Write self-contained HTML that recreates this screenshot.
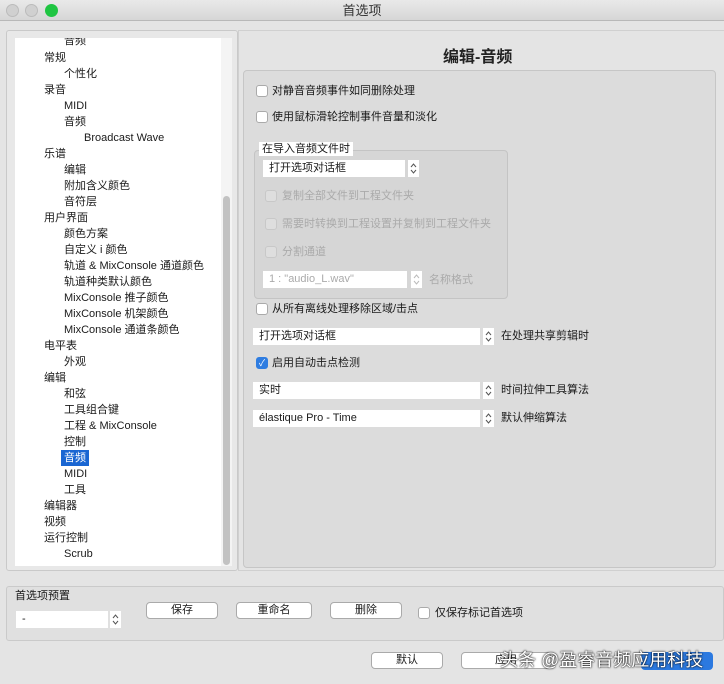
<!DOCTYPE html>
<html><head><meta charset="utf-8"><style>
*{margin:0;padding:0;box-sizing:border-box}
body{width:724px;height:684px;background:#e4e4e4;font-family:"Liberation Sans","Noto Sans CJK SC",sans-serif;font-size:11px;color:#1a1a1a;position:relative;overflow:hidden}
.a{position:absolute;white-space:nowrap}
.tb{position:absolute;left:0;top:0;width:724px;height:21px;background:linear-gradient(#e9e9e9,#d6d6d6);border-bottom:1px solid #b8b8b8;text-align:center;font-size:13px;line-height:21px;color:#333}
.dot{position:absolute;top:4px;width:13px;height:13px;border-radius:50%}
.tree div{position:absolute;height:16px;line-height:16px;white-space:nowrap}
.cb{position:absolute;width:12px;height:12px;border:1px solid #aaa;border-radius:3px;background:#fff}
.cbd{border-color:#c8c8c8;background:#dedede}
.sel{position:absolute;height:17px;background:#fff;line-height:17px;padding-left:6px}
.st{position:absolute;width:11px;height:17px;background:#fff}
.st svg{display:block}
.btn{position:absolute;height:17px;background:#fff;border:1px solid #aaa;border-radius:4px;text-align:center;line-height:15px}
.lbl{position:absolute;white-space:nowrap;line-height:14px}
.g{color:#aaa}
</style></head><body>
<div class="tb">首选项</div>
<div class="dot" style="left:6px;background:#d0d0d0;border:1px solid #bbb"></div>
<div class="dot" style="left:25px;background:#d0d0d0;border:1px solid #bbb"></div>
<div class="dot" style="left:45px;background:#1fc542"></div>

<div class="a" style="left:6px;top:30px;width:232px;height:541px;border:1px solid #c9c9c9;border-radius:3px;background:#e8e8e8"></div>
<div class="a" style="left:15px;top:38px;width:206px;height:528px;background:#fff;overflow:hidden">
<div class="tree">
<div style="left:49px;top:-5px">音频</div>
<div style="left:29px;top:12px">常规</div>
<div style="left:49px;top:28px">个性化</div>
<div style="left:29px;top:44px">录音</div>
<div style="left:49px;top:60px">MIDI</div>
<div style="left:49px;top:76px">音频</div>
<div style="left:69px;top:92px">Broadcast Wave</div>
<div style="left:29px;top:108px">乐谱</div>
<div style="left:49px;top:124px">编辑</div>
<div style="left:49px;top:140px">附加含义颜色</div>
<div style="left:49px;top:156px">音符层</div>
<div style="left:29px;top:172px">用户界面</div>
<div style="left:49px;top:188px">颜色方案</div>
<div style="left:49px;top:204px">自定义 i 颜色</div>
<div style="left:49px;top:220px">轨道 &amp; MixConsole 通道颜色</div>
<div style="left:49px;top:236px">轨道种类默认颜色</div>
<div style="left:49px;top:252px">MixConsole 推子颜色</div>
<div style="left:49px;top:268px">MixConsole 机架颜色</div>
<div style="left:49px;top:284px">MixConsole 通道条颜色</div>
<div style="left:29px;top:300px">电平表</div>
<div style="left:49px;top:316px">外观</div>
<div style="left:29px;top:332px">编辑</div>
<div style="left:49px;top:348px">和弦</div>
<div style="left:49px;top:364px">工具组合键</div>
<div style="left:49px;top:380px">工程 &amp; MixConsole</div>
<div style="left:49px;top:396px">控制</div>
<div style="left:46px;top:412px;background:#1a66d2;color:#fff;padding:0 3px">音频</div>
<div style="left:49px;top:428px">MIDI</div>
<div style="left:49px;top:444px">工具</div>
<div style="left:29px;top:460px">编辑器</div>
<div style="left:29px;top:476px">视频</div>
<div style="left:29px;top:492px">运行控制</div>
<div style="left:49px;top:508px">Scrub</div>
</div></div>
<div class="a" style="left:221px;top:38px;width:11px;height:528px;background:#f4f4f4"></div>
<div class="a" style="left:223px;top:196px;width:7px;height:369px;background:#c2c2c2;border-radius:4px"></div>

<div class="a" style="left:238px;top:30px;width:490px;height:541px;border:1px solid #d0d0d0;background:#e4e4e4"></div>
<div class="a" style="left:443px;top:43px;font-size:16px;font-weight:bold;color:#222">编辑-音频</div>
<div class="a" style="left:243px;top:70px;width:473px;height:498px;background:#dcdcdc;border:1px solid #c6c6c6;border-radius:4px"></div>

<div class="cb" style="left:256px;top:85px"></div><div class="lbl" style="left:272px;top:84px">对静音音频事件如同删除处理</div>
<div class="cb" style="left:256px;top:111px"></div><div class="lbl" style="left:272px;top:110px">使用鼠标滑轮控制事件音量和淡化</div>

<div class="a" style="left:254px;top:150px;width:254px;height:149px;background:#d6d6d6;border:1px solid #c4c4c4;border-radius:4px"></div>
<div class="lbl" style="left:259px;top:142px;background:#fff;padding:0 3px">在导入音频文件时</div>
<div class="sel" style="left:263px;top:160px;width:142px">打开选项对话框</div>
<div class="st" style="left:408px;top:160px"><svg width="11" height="17"><path d="M3 7 L5.5 4 L8 7 M3 10 L5.5 13 L8 10" fill="none" stroke="#555" stroke-width="1"/></svg></div>
<div class="cb cbd" style="left:265px;top:190px"></div><div class="lbl g" style="left:282px;top:189px">复制全部文件到工程文件夹</div>
<div class="cb cbd" style="left:265px;top:218px"></div><div class="lbl g" style="left:282px;top:217px">需要时转换到工程设置并复制到工程文件夹</div>
<div class="cb cbd" style="left:265px;top:246px"></div><div class="lbl g" style="left:282px;top:245px">分割通道</div>
<div class="sel g" style="left:263px;top:271px;width:144px">1 : "audio_L.wav"</div>
<div class="st" style="left:411px;top:271px"><svg width="11" height="17"><path d="M3 7 L5.5 4 L8 7 M3 10 L5.5 13 L8 10" fill="none" stroke="#bbb" stroke-width="1"/></svg></div>
<div class="lbl g" style="left:429px;top:273px">名称格式</div>

<div class="cb" style="left:256px;top:303px"></div><div class="lbl" style="left:272px;top:302px">从所有离线处理移除区域/击点</div>
<div class="sel" style="left:253px;top:328px;width:227px">打开选项对话框</div>
<div class="st" style="left:483px;top:328px"><svg width="11" height="17"><path d="M3 7 L5.5 4 L8 7 M3 10 L5.5 13 L8 10" fill="none" stroke="#555" stroke-width="1"/></svg></div><div class="lbl" style="left:501px;top:329px">在处理共享剪辑时</div>
<div class="cb" style="left:256px;top:357px;background:#2f7de1;border-color:#2f7de1;color:#fff;font-size:9px;line-height:10px;text-align:center">✓</div><div class="lbl" style="left:272px;top:356px">启用自动击点检测</div>
<div class="sel" style="left:253px;top:382px;width:227px">实时</div>
<div class="st" style="left:483px;top:382px"><svg width="11" height="17"><path d="M3 7 L5.5 4 L8 7 M3 10 L5.5 13 L8 10" fill="none" stroke="#555" stroke-width="1"/></svg></div><div class="lbl" style="left:501px;top:383px">时间拉伸工具算法</div>
<div class="sel" style="left:253px;top:410px;width:227px">élastique Pro - Time</div>
<div class="st" style="left:483px;top:410px"><svg width="11" height="17"><path d="M3 7 L5.5 4 L8 7 M3 10 L5.5 13 L8 10" fill="none" stroke="#555" stroke-width="1"/></svg></div><div class="lbl" style="left:501px;top:411px">默认伸缩算法</div>

<div class="a" style="left:6px;top:586px;width:718px;height:55px;background:#e0e0e0;border:1px solid #cacaca;border-radius:3px"></div>
<div class="lbl" style="left:15px;top:589px">首选项预置</div>
<div class="sel" style="left:16px;top:611px;width:92px;padding-left:6px">-</div>
<div class="st" style="left:110px;top:611px"><svg width="11" height="17"><path d="M3 7 L5.5 4 L8 7 M3 10 L5.5 13 L8 10" fill="none" stroke="#555" stroke-width="1"/></svg></div>
<div class="btn" style="left:146px;top:602px;width:72px">保存</div>
<div class="btn" style="left:236px;top:602px;width:76px">重命名</div>
<div class="btn" style="left:330px;top:602px;width:72px">删除</div>
<div class="cb" style="left:418px;top:607px"></div><div class="lbl" style="left:435px;top:606px">仅保存标记首选项</div>

<div class="btn" style="left:371px;top:652px;width:72px">默认</div>
<div class="btn" style="left:461px;top:652px;width:90px">应用</div>
<div class="a" style="left:641px;top:652px;width:72px;height:18px;background:#2b79e0;border-radius:4px"></div>
<div class="a" style="left:500px;top:646px;font-size:18px;color:#fff;text-shadow:0 0 2px #000,0 0 1px #000">头条 @盈睿音频应用科技</div>
</body></html>
